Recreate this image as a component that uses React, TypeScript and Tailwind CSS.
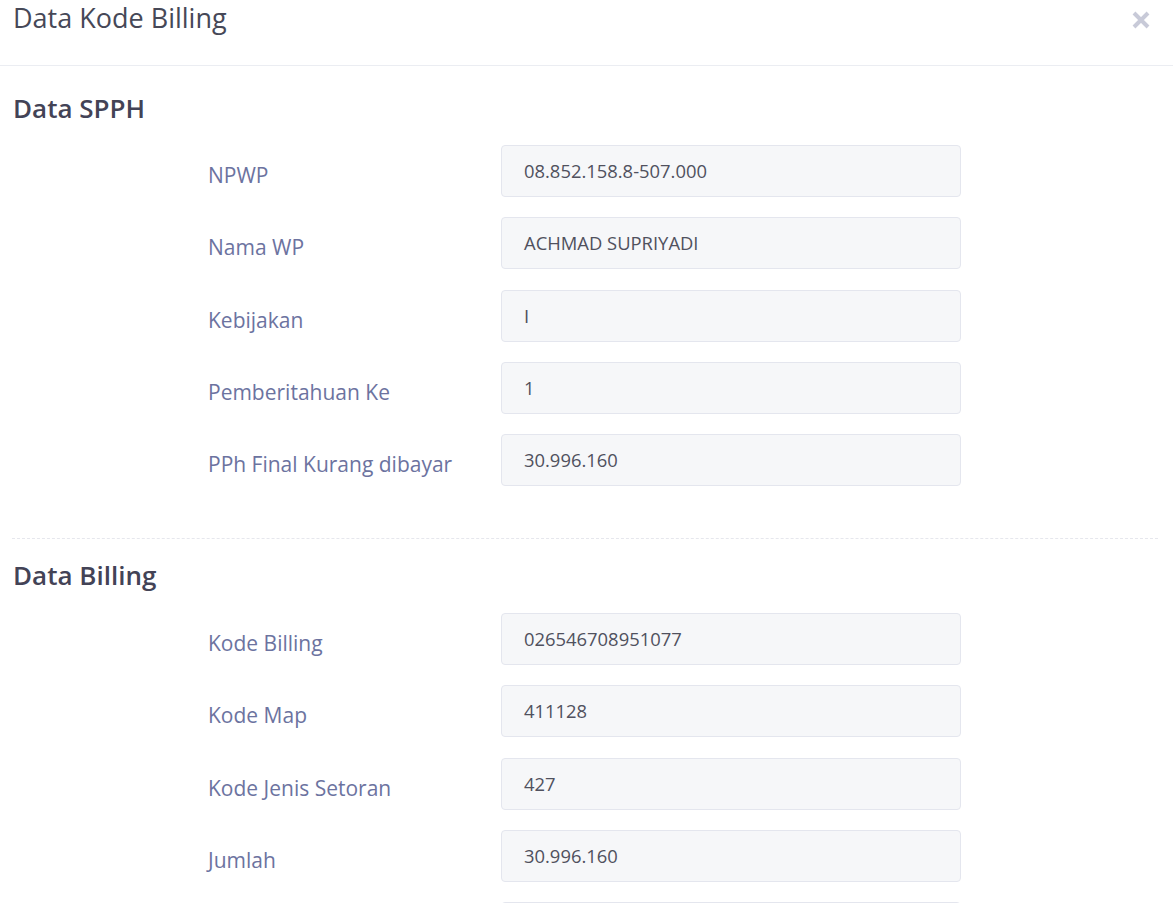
import React from 'react';

const spph = [
  { label: 'NPWP', value: '08.852.158.8-507.000' },
  { label: 'Nama WP', value: 'ACHMAD SUPRIYADI' },
  { label: 'Kebijakan', value: 'I' },
  { label: 'Pemberitahuan Ke', value: '1' },
  { label: 'PPh Final Kurang dibayar', value: '30.996.160' },
];

const billing = [
  { label: 'Kode Billing', value: '026546708951077' },
  { label: 'Kode Map', value: '411128' },
  { label: 'Kode Jenis Setoran', value: '427' },
  { label: 'Jumlah', value: '30.996.160' },
  { label: '', value: '' },
];

const Field = ({ label, value }: { label: string; value: string }) => (
  <div className="flex items-start">
    <label className="ml-[196px] w-[293px] pt-[16px] text-[21px] leading-[28px] text-[#6c739f]">
      {label}
    </label>
    <div className="w-[460px] h-[52px] flex items-center pl-[22px] rounded-[4px] border border-[#e4e6ee] bg-[#f6f7f9] text-[18.4px] text-[#50515e]">
      {value}
    </div>
  </div>
);

export default function App() {
  return (
    <div className="h-[903px] overflow-hidden bg-white font-['Open_Sans',sans-serif]">
      <header className="h-[66px] flex items-start justify-between border-b border-[#ebedf2] pl-[13px] pr-[22px]">
        <h1 className="text-[27px] leading-[36px] text-[#464857]">Data Kode Billing</h1>
        <button className="mt-[10px] text-[#c8cad8]">
          <svg width="20" height="20" viewBox="0 0 20 20">
            <path d="M3 3 L17 17 M17 3 L3 17" stroke="currentColor" strokeWidth="4" />
          </svg>
        </button>
      </header>

      <section className="pl-[12px] pr-[15px]">
        <h2 className="mt-[24px] pl-px text-[26px] leading-[36px] font-semibold text-[#434356]">Data SPPH</h2>
        <div className="mt-[19px] flex flex-col gap-[20.25px]">
          {spph.map((f) => (
            <Field key={f.label} {...f} />
          ))}
        </div>

        <div className="mt-[52px] border-t border-dashed border-[#e6e7ed]" />

        <h2 className="mt-[18px] pl-px text-[26px] leading-[36px] font-semibold text-[#434356]">Data Billing</h2>
        <div className="mt-[20px] flex flex-col gap-[20.25px]">
          {billing.map((f, i) => (
            <Field key={i} {...f} />
          ))}
        </div>
      </section>
    </div>
  );
}
